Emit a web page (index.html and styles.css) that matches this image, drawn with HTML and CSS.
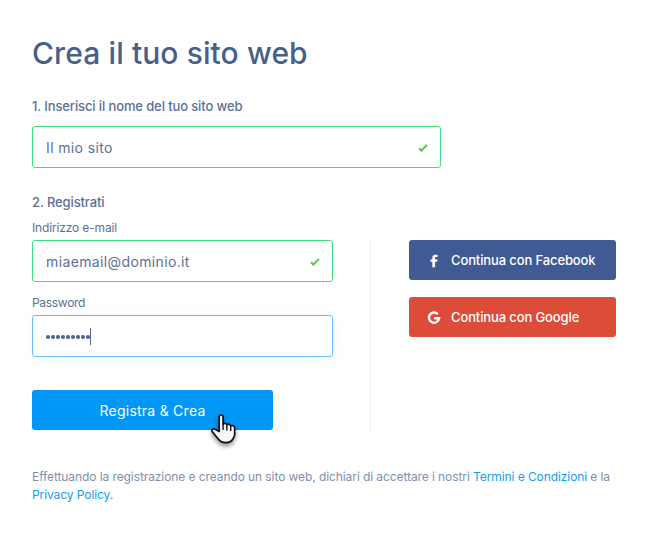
FILE: index.html
```
<!DOCTYPE html>
<html lang="it">
<head>
  <meta charset="UTF-8">
  <meta name="viewport" content="width=device-width, initial-scale=1.0">
  <title>Crea il tuo sito web</title>
  <link rel="stylesheet" href="styles.css">
</head>
<body>
  <form class="signup">
    <h1>Crea il tuo sito web</h1>

    <h2 class="step-one">1. Inserisci il nome del tuo sito web</h2>
    <div class="field valid site-name">
      <span class="value">Il mio sito</span>
      <svg class="check" width="10" height="8" viewBox="0 0 10 8"><path d="M1 4.3L3.4 6.6L9 .9" fill="none" stroke="#5abf52" stroke-width="1.9"/></svg>
    </div>

    <h2 class="step-two">2. Registrati</h2>
    <div class="columns">
      <div class="account">
        <div class="label">Indirizzo e-mail</div>
        <div class="field valid">
          <span class="value">miaemail@dominio.it</span>
          <svg class="check" width="10" height="8" viewBox="0 0 10 8"><path d="M1 4.3L3.4 6.6L9 .9" fill="none" stroke="#5abf52" stroke-width="1.9"/></svg>
        </div>
        <div class="label label-password">Password</div>
        <div class="field focused">
          <span class="dots"><i></i><i></i><i></i><i></i><i></i><i></i><i></i><i></i><i></i></span>
          <span class="caret"></span>
        </div>
        <div class="submit">
          <span>Registra &amp; Crea</span>
          <svg class="pointer" width="28" height="32" viewBox="0 0 28 32"><path d="M9.2 18.5V4.3C9.2 1.2 13.1 1.2 13.1 4.3V11.2C14.2 9.8 16.4 10.2 16.9 11.8C18.2 10.7 20.2 11.3 20.7 12.9C22.2 12 24.7 12.7 24.7 15.2V21.3C24.7 23.3 23.6 24.8 22.7 26.3C21.3 28.7 19.2 29.6 15.9 29.6C12.1 29.6 10 28.5 8.1 25.7L2.4 18.9C1 16.9 3 15.2 5 16.2Z" fill="#f8f8f8" stroke="#111" stroke-width="1.7" stroke-linejoin="round"/><path d="M13.1 11V16.5M16.9 12V17M20.7 13V17.5" fill="none" stroke="#111" stroke-width="1.4" stroke-linecap="round"/></svg>
        </div>
      </div>

      <div class="social">
        <div class="social-button facebook">
          <svg width="14" height="14" viewBox="0 0 14 14"><path d="M5.3 13.2V7.8H3.4V5.4H5.3V3.9C5.3 1.8 6.6.8 8.4.8H10.6V3.1H9.2C8.3 3.1 8.1 3.5 8.1 4.2V5.4H10.6L10.2 7.8H8.1V13.2Z" fill="#fff"/></svg>
          <span>Continua con Facebook</span>
        </div>
        <div class="social-button google">
          <svg width="14" height="14" viewBox="0 0 14 14"><path d="M10.8 3.2A5.1 5.1 0 1 0 12.1 7.2H7" fill="none" stroke="#fff" stroke-width="2.4"/></svg>
          <span>Continua con Google</span>
        </div>
      </div>
    </div>

    <p class="terms">Effettuando la registrazione e creando un sito web, dichiari di accettare i nostri <a>Termini e Condizioni</a> e la <br><a>Privacy Policy.</a></p>
  </form>
</body>
</html>
```
FILE: styles.css
```
* {
  box-sizing: border-box;
}
body {
  margin: 0;
  background: #fff;
  color: #5c6f98;
  font-family: Inter, "Liberation Sans", sans-serif;
}
.signup {
  padding: 34px 32px 0;
}
h1 {
  margin: 0;
  font-size: 30px;
  line-height: 38px;
  font-weight: 500;
  letter-spacing: 0.1px;
  color: #485f8a;
}
h2 {
  margin: 0;
  font-size: 13px;
  line-height: 18px;
  font-weight: 500;
  letter-spacing: -0.12px;
}
.step-one {
  margin-top: 25px;
}
.step-two {
  margin-top: 25px;
  height: 26px;
}
.field {
  display: flex;
  align-items: center;
  height: 42px;
  padding: 0 12px 0 13px;
  border: 1px solid #bcc8dc;
  border-radius: 3px;
  background: #fff;
}
.valid {
  border-color: #42e07a;
}
.focused {
  border-color: #69bdfa;
  box-shadow: 0 2px 14px rgba(70, 100, 210, 0.06);
}
.site-name {
  width: 409px;
  margin-top: 11px;
}
.value {
  font-size: 14px;
  line-height: 20px;
  padding-top: 2px;
  letter-spacing: 0.37px;
}
.check {
  margin-left: auto;
  margin-top: 2px;
}
.columns {
  display: flex;
}
.account {
  width: 339px;
  height: 211px;
  padding-right: 38px;
}
.label {
  height: 21px;
  font-size: 12px;
  line-height: 18px;
  letter-spacing: -0.15px;
}
.label-password {
  margin-top: 12px;
  letter-spacing: -0.3px;
}
.dots {
  display: flex;
  gap: 1.5px;
  margin-top: 2px;
}
.dots i {
  width: 3.5px;
  height: 3.5px;
  border-radius: 50%;
  background: #536992;
}
.caret {
  width: 1px;
  height: 17px;
  background: #536992;
}
.submit {
  position: relative;
  width: 241px;
  height: 40px;
  margin-top: 33px;
  padding-top: 1px;
  border-radius: 3px;
  background: #0097f7;
  color: #fff;
  font-size: 14px;
  line-height: 40px;
  letter-spacing: 0.25px;
  text-align: center;
}
.pointer {
  position: absolute;
  left: 178px;
  top: 23px;
  overflow: visible;
  filter: drop-shadow(0 3px 2px rgba(0, 0, 0, 0.4));
}
.social {
  width: 246px;
  height: 190px;
  margin-top: 21px;
  margin-left: -1px;
  padding-left: 38px;
  border-left: 1px solid #ebedf3;
}
.social-button {
  display: flex;
  align-items: center;
  gap: 10px;
  width: 207px;
  height: 40px;
  padding: 1px 0 0 18px;
  border-radius: 3px;
  color: #fff;
  font-size: 13px;
  font-weight: 500;
  letter-spacing: -0.12px;
  white-space: nowrap;
}
.social-button span {
  padding-bottom: 2px;
}
.facebook {
  background: #405a94;
}
.google {
  margin-top: 17px;
  background: #dd4b39;
}
.terms {
  margin: 38px 0 0;
  font-size: 12px;
  line-height: 18px;
  letter-spacing: -0.085px;
  color: #8090ad;
  white-space: nowrap;
}
.terms a {
  color: #119df5;
}
```
